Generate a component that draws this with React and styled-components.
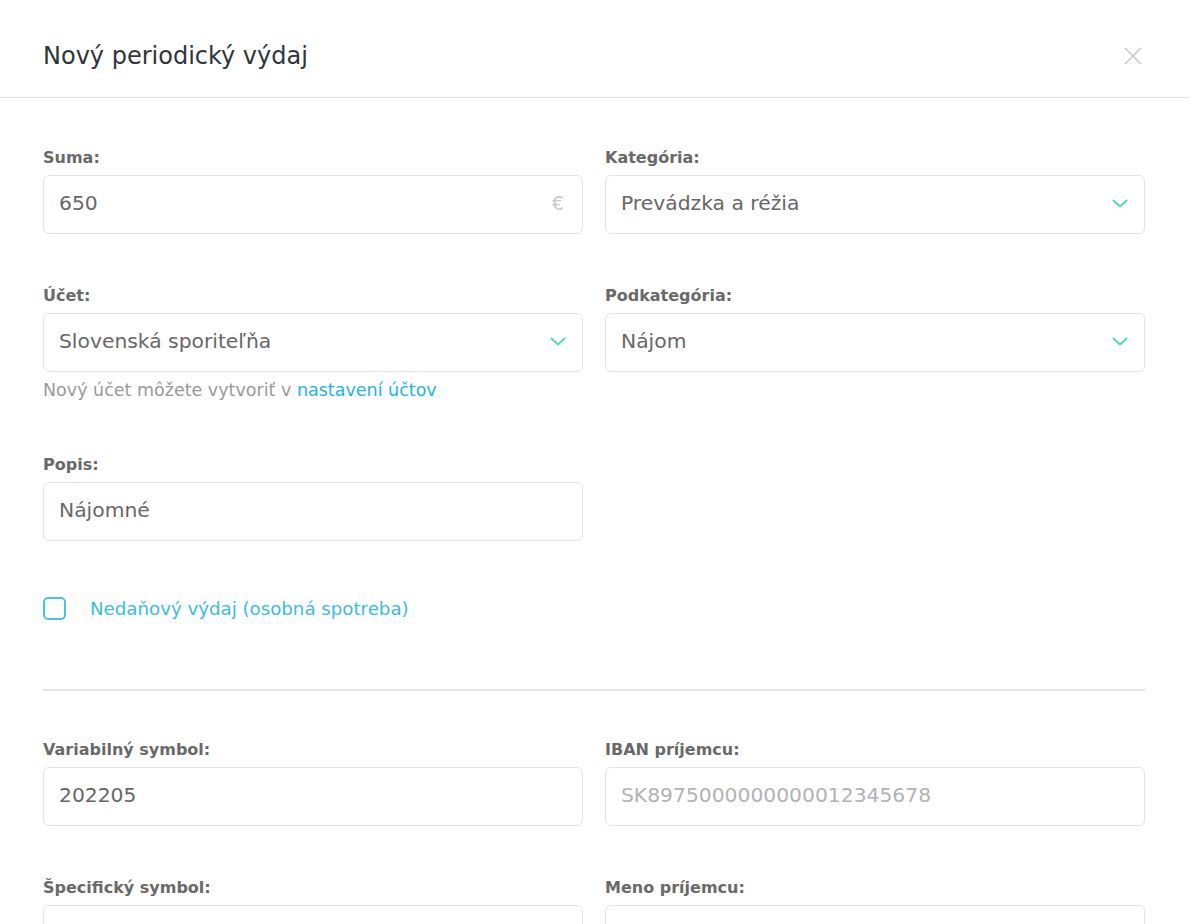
import React from "react";
import styled, { createGlobalStyle } from "styled-components";

const Global = createGlobalStyle`
  html, body { margin: 0; padding: 0; background: #fff; }
  body { font-family: "DejaVu Sans", Verdana, sans-serif; }
  * { box-sizing: border-box; }
`;

const Modal = styled.div`
  width: 1189px;
  background: #fff;
`;

const Header = styled.header`
  height: 98px;
  border-bottom: 1px solid #e4e4e6;
  display: flex;
  align-items: center;
  justify-content: space-between;
  padding: 15px 46px 0 43px;
`;

const Title = styled.h2`
  margin: 0;
  font-size: 24px;
  line-height: 30px;
  font-weight: 400;
  color: #2f353d;
`;

const Close = styled.button`
  border: 0;
  background: none;
  padding: 0;
  width: 20px;
  height: 20px;
  display: flex;
  align-items: center;
  justify-content: center;
  cursor: pointer;
`;

const Body = styled.div`
  padding: 50px 44px 0 43px;
`;

const Row = styled.div`
  display: grid;
  grid-template-columns: 1fr 1fr;
  column-gap: 22px;
  margin-bottom: ${(p) => p.$mb ?? 52}px;
`;

const Field = styled.div`
  display: flex;
  flex-direction: column;
`;

const Label = styled.label`
  font-size: 16px;
  line-height: 20px;
  font-weight: 700;
  color: #696969;
  margin-bottom: 7px;
`;

const Box = styled.div`
  height: 59px;
  border: 1px solid #e3e3e5;
  border-radius: 6px;
  display: flex;
  align-items: center;
  justify-content: space-between;
  padding: 0 16px 3px 15px;
  font-size: 20.3px;
  color: ${(p) => (p.$placeholder ? "#b0b2b6" : "#676767")};
`;

const Suffix = styled.span`
  font-size: 19px;
  color: #c8c8c8;
  margin-right: 2px;
`;

const Help = styled.div`
  margin-top: 7px;
  font-size: 17.5px;
  line-height: 22px;
  color: #9a9a9a;
`;

const Link = styled.a`
  color: #23b5e0;
  text-decoration: none;
`;

const CheckRow = styled.label`
  display: flex;
  align-items: center;
  gap: 24px;
  height: 23px;
  margin-bottom: 69px;
  font-size: 18.2px;
  color: #3bbde4;
`;

const CheckBox = styled.span`
  width: 23px;
  height: 23px;
  border: 2px solid #48c2e7;
  border-radius: 5px;
  flex: none;
`;

const Divider = styled.hr`
  margin: 0 0 49px;
  border: 0;
  border-top: 2px solid #e2e2e2;
`;

const Chevron = () => (
  <svg width="16" height="9" viewBox="0 0 16 9" fill="none">
    <path d="M1.5 1.5l6.5 6 6.5-6" stroke="#55dba8" strokeWidth="2" strokeLinecap="round" strokeLinejoin="round" />
  </svg>
);

const CloseIcon = () => (
  <svg width="18" height="18" viewBox="0 0 18 18" fill="none">
    <path d="M1 1l16 16M17 1L1 17" stroke="#c9c9cb" strokeWidth="1.6" />
  </svg>
);

const Input = ({ value, placeholder, suffix, select }) => (
  <Box $placeholder={placeholder}>
    <span>{value}</span>
    {suffix && <Suffix>{suffix}</Suffix>}
    {select && <Chevron />}
  </Box>
);

export default function App() {
  return (
    <Modal>
      <Global />
      <Header>
        <Title>Nový periodický výdaj</Title>
        <Close aria-label="Zavrieť">
          <CloseIcon />
        </Close>
      </Header>
      <Body>
        <Row>
          <Field>
            <Label>Suma:</Label>
            <Input value="650" suffix="€" />
          </Field>
          <Field>
            <Label>Kategória:</Label>
            <Input value="Prevádzka a réžia" select />
          </Field>
        </Row>
        <Row $mb={54}>
          <Field>
            <Label>Účet:</Label>
            <Input value="Slovenská sporiteľňa" select />
            <Help>
              Nový účet môžete vytvoriť v <Link href="#">nastavení účtov</Link>
            </Help>
          </Field>
          <Field>
            <Label>Podkategória:</Label>
            <Input value="Nájom" select />
          </Field>
        </Row>
        <Row $mb={56}>
          <Field>
            <Label>Popis:</Label>
            <Input value="Nájomné" />
          </Field>
        </Row>
        <CheckRow>
          <CheckBox />
          Nedaňový výdaj (osobná spotreba)
        </CheckRow>
        <Divider />
        <Row>
          <Field>
            <Label>Variabilný symbol:</Label>
            <Input value="202205" />
          </Field>
          <Field>
            <Label>IBAN príjemcu:</Label>
            <Input value="SK8975000000000012345678" placeholder />
          </Field>
        </Row>
        <Row>
          <Field>
            <Label>Špecifický symbol:</Label>
            <Input value="" />
          </Field>
          <Field>
            <Label>Meno príjemcu:</Label>
            <Input value="" />
          </Field>
        </Row>
      </Body>
    </Modal>
  );
}
